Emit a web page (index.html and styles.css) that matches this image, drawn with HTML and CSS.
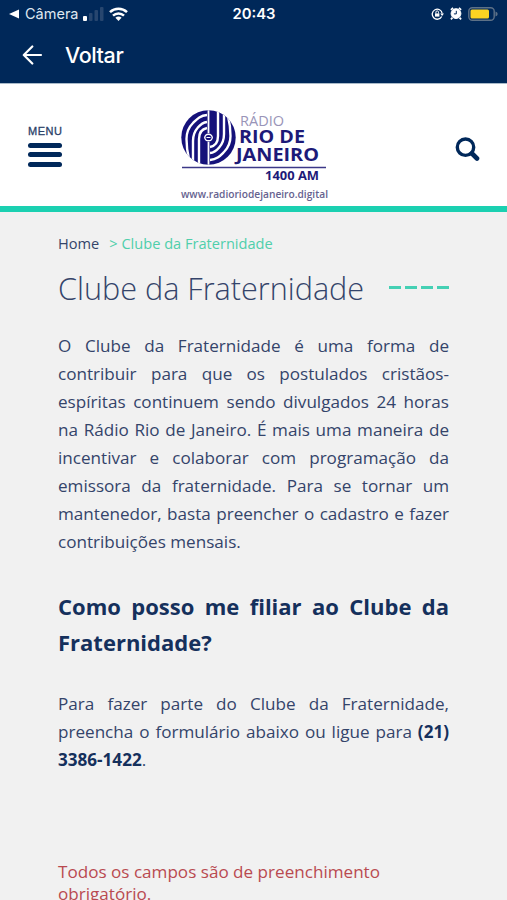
FILE: index.html
```html
<!DOCTYPE html>
<html lang="pt-BR">
<head>
    <meta charset="UTF-8">
    <meta name="viewport" content="width=device-width, initial-scale=1.0">
    <title>Clube da Fraternidade</title>
    <link rel="stylesheet" href="styles.css">
</head>
<body>
    <div class="app-bar">
        <div class="status">
            <div class="status-left">
                <svg width="11" height="10" viewBox="0 0 11 10"><path d="M0 5 10 .5v9z" fill="#fff"/></svg>
                <span class="status-app">Câmera</span>
                <svg class="signal" width="21" height="14" viewBox="0 0 21 14">
                    <rect x="0" y="9" width="4" height="5" rx="1" fill="#fff"/>
                    <rect x="6" y="6" width="3.5" height="8" rx="1" fill="#27466f"/>
                    <rect x="11.5" y="3" width="3.5" height="11" rx="1" fill="#27466f"/>
                    <rect x="17" y="0" width="3.5" height="14" rx="1" fill="#27466f"/>
                </svg>
                <svg class="wifi" width="19" height="14" viewBox="0 0 19 14" fill="none" stroke="#fff" stroke-width="2.5">
                    <path d="M1 5.2a12.4 12.4 0 0 1 17 0M4 8.6a8 8 0 0 1 11 0"/>
                    <path d="M9.5 14 6.4 10.8a4.6 4.6 0 0 1 6.2 0z" fill="#fff" stroke="none"/>
                </svg>
            </div>
            <span class="status-time">20:43</span>
            <div class="status-right">
                <svg width="13" height="12" viewBox="0 0 13 12" fill="none" stroke="#fff" stroke-width="1.3">
                    <path d="M10.7 8.5a5 5 0 1 1 .5-3"/>
                    <path d="m9.2 5.5 3.8 0-1.9 2.6z" fill="#fff" stroke="none"/>
                    <path d="M4 5.4h4.4v3.2H4z" fill="#fff" stroke="none"/>
                    <path d="M4.9 5.5V4.2a1.3 1.3 0 0 1 2.6 0v1.3" stroke-width="1"/>
                </svg>
                <svg width="12" height="13" viewBox="0 0 12 13" fill="none" stroke="#fff">
                    <circle cx="6" cy="6.6" r="4.9" fill="#fff"/>
                    <path d="M.9 2.9 3.1.9M11.1 2.9 8.9.9M2.5 10.7.9 12.3M9.5 10.7l1.6 1.6" stroke-width="1.8"/>
                    <path d="M6.3 3.8v3.1H3.9" stroke="#002859"/>
                </svg>
                <svg width="31" height="14" viewBox="0 0 31 14">
                    <rect x=".8" y=".8" width="25.4" height="12.4" rx="3.5" fill="none" stroke="#5d7187" stroke-width="1.4"/>
                    <rect x="2.5" y="2.4" width="18.5" height="9.2" rx="1.5" fill="#fbd322"/>
                    <path d="M27.5 4.5q2.2.8 2.2 2.5t-2.2 2.5z" fill="#5d7187"/>
                </svg>
            </div>
        </div>
        <div class="back">
            <svg width="21" height="20" viewBox="0 0 21 20" fill="none" stroke="#fff" stroke-width="2.2" stroke-linecap="round" stroke-linejoin="round">
                <path d="M19 10H2M10.3 1.5 1.8 10l8.5 8.5"/>
            </svg>
            <span>Voltar</span>
        </div>
    </div>

    <header class="header">
        <div class="menu">
            <span class="menu-label">MENU</span>
            <span class="menu-bar"></span>
            <span class="menu-bar"></span>
            <span class="menu-bar"></span>
        </div>
        <svg class="logo" width="156" height="100" viewBox="176 104 156 100">
            <clipPath id="disc"><circle cx="208.500" cy="137.500" r="27.200"/></clipPath>
            <g clip-path="url(#disc)">
                <rect x="181" y="110" width="55" height="55" fill="#15117a"/>
                <g fill="none" stroke="#fff" stroke-width="2.4">
                    <path d="M207 115c-7 .5-10 4-14 8-5 5-6.500 9-6.500 16 0 6 .5 12 2.500 20"/>
                    <path d="M207 122c-5 .5-7 3-9.500 6-3.500 4-4.500 7-4.500 13v24"/>
                    <path d="M207 128c-5 1-8 5-8 11v27"/>
                    <path d="M210 160c7-.5 10-4 14-8 5-5 6.500-9 6.500-16 0-6-.5-12-2.500-20"/>
                    <path d="M210 153c5-.5 7-3 9.500-6 3.500-4 4.500-7 4.500-13v-24"/>
                    <path d="M210 147c5-1 8-5 8-11v-27"/>
                    <path d="M208.500 109v24M208.500 142v24" stroke-width="1.800"/>
                </g>
                <ellipse cx="208.500" cy="137.500" rx="4.400" ry="4" fill="#fff"/>
                <ellipse cx="208.500" cy="137.500" rx="3" ry="2.600" fill="#15117a"/>
                <path d="M206.500 137.500h4" stroke="#fff"/>
            </g>
            <text class="logo-radio" x="240" y="126" textLength="44" lengthAdjust="spacingAndGlyphs">RÁDIO</text>
            <text class="logo-name" x="239" y="143" textLength="66" lengthAdjust="spacingAndGlyphs">RIO DE</text>
            <text class="logo-name" x="236" y="160.500" textLength="83" lengthAdjust="spacingAndGlyphs">JANEIRO</text>
            <path d="M182 167.500h144" stroke="#3c3888" stroke-width="1.300"/>
            <text class="logo-am" x="265" y="179.500" textLength="54" lengthAdjust="spacingAndGlyphs">1400 AM</text>
            <text class="logo-site" x="181" y="197.500" textLength="147" lengthAdjust="spacingAndGlyphs">www.radioriodejaneiro.digital</text>
        </svg>
        <svg class="search" width="25" height="25" viewBox="0 0 25 25" fill="none" stroke="#00285a">
            <circle cx="10.500" cy="10.200" r="8.200" stroke-width="3.400"/>
            <path d="m17 16.500 5 5" stroke-width="4.600" stroke-linecap="round"/>
        </svg>
    </header>

    <main class="content">
        <nav class="breadcrumb">
            <span>Home</span>
            <span class="current">&gt; Clube da Fraternidade</span>
        </nav>
        <div class="title">
            <h1>Clube da Fraternidade</h1>
            <div class="dashes"><i></i><i></i><i></i><i></i></div>
        </div>
        <p>O Clube da Fraternidade é uma forma de contribuir para que os postulados cristãos-espíritas continuem sendo divulgados 24 horas na Rádio Rio de Janeiro. É mais uma maneira de incentivar e colaborar com programação da emissora da fraternidade. Para se tornar um mantenedor, basta preencher o cadastro e fazer contribuições mensais.</p>
        <h2>Como posso me filiar ao Clube da Fraternidade?</h2>
        <p>Para fazer parte do Clube da Fraternidade, preencha o formulário abaixo ou ligue para <strong>(21) 3386-1422</strong>.</p>
        <div class="required">Todos os campos são de preenchimento obrigatório.</div>
    </main>
</body>
</html>
```
FILE: styles.css
```css
* {
    box-sizing: border-box;
}
body {
    margin: 0;
    height: 900px;
    overflow: hidden;
    font-family: "Open Sans", sans-serif;
    background-color: #f1f1f1;
    color: #34446a;
}
svg {
    display: block;
    flex-shrink: 0;
}

/* Top bar */
.app-bar {
    height: 84px;
    background-color: #002859;
    border-bottom: 1px solid #a9bac9;
    color: white;
    font-family: Inter, sans-serif;
}
.status {
    display: grid;
    grid-template-columns: 1fr auto 1fr;
    align-items: center;
    height: 27px;
    padding: 0 8px 0 9px;
}
.status-left, .status-right {
    display: flex;
    align-items: center;
}
.status-app {
    margin-left: 5px;
    width: 53px;
    font-size: 14.5px;
    color: #dfe7f0;
}
.signal {
    margin-left: 5px;
}
.wifi {
    margin-left: 5px;
}
.status-time {
    font-size: 14.8px;
    font-weight: 600;
}
.status-right {
    justify-content: flex-end;
    gap: 6px;
    padding-right: 0;
}
.back {
    display: flex;
    align-items: center;
    gap: 22px;
    height: 56px;
    padding-left: 22px;
    font-size: 21.5px;
    font-weight: 500;
    letter-spacing: -0.4px;
}

/* Header */
.header {
    display: flex;
    justify-content: space-between;
    height: 128px;
    padding: 20px 27px 0 28px;
    background-color: white;
    border-bottom: 6px solid #1bd0b1;
}
.menu {
    display: flex;
    flex-direction: column;
    gap: 4.7px;
    width: 34px;
    padding-top: 21px;
}
.menu-label {
    font-family: "Liberation Sans", sans-serif;
    font-size: 11px;
    line-height: 13px;
    letter-spacing: 0.5px;
    color: #2b4168;
    -webkit-text-stroke: 0.3px #2b4168;
}
.menu-bar {
    height: 5px;
    border-radius: 3px;
    background-color: #00285a;
}
.logo {
    margin-right: -10px;
    margin-left: -20px;
}
.search {
    margin-top: 33px;
}
.logo-radio {
    font-size: 15px;
    fill: #9994b8;
}
.logo-name {
    font-size: 18px;
    font-weight: 700;
    fill: #1d1a78;
}
.logo-am {
    font-size: 12px;
    font-weight: 700;
    fill: #1d1a78;
}
.logo-site {
    font-size: 10.5px;
    font-weight: 600;
    fill: #66628f;
}

/* Content */
.content {
    padding: 21px 58px 0;
}
.breadcrumb {
    display: flex;
    gap: 10px;
    font-size: 14.6px;
    line-height: 20px;
}
.current {
    color: #4fcfab;
}
.title {
    display: flex;
    align-items: center;
    justify-content: space-between;
    height: 44px;
    margin: 12.5px 0 22px;
}
h1 {
    margin: 0;
    font-size: 30.6px;
    font-weight: 300;
    white-space: nowrap;
}
.dashes {
    display: flex;
    gap: 4px;
}
.dashes i {
    width: 12px;
    height: 3px;
    background-color: #45d0b4;
}
p {
    margin: 0;
    font-size: 17.1px;
    line-height: 28.1px;
    text-align: justify;
}
h2 {
    margin: 31.5px 0 30.5px;
    font-size: 22px;
    line-height: 36px;
    font-weight: 700;
    text-align: justify;
    color: #15305c;
}
strong {
    color: #15305c;
}
.required {
    margin-top: 86.5px;
    font-size: 17.1px;
    line-height: 22px;
    color: #b94a50;
}
```
